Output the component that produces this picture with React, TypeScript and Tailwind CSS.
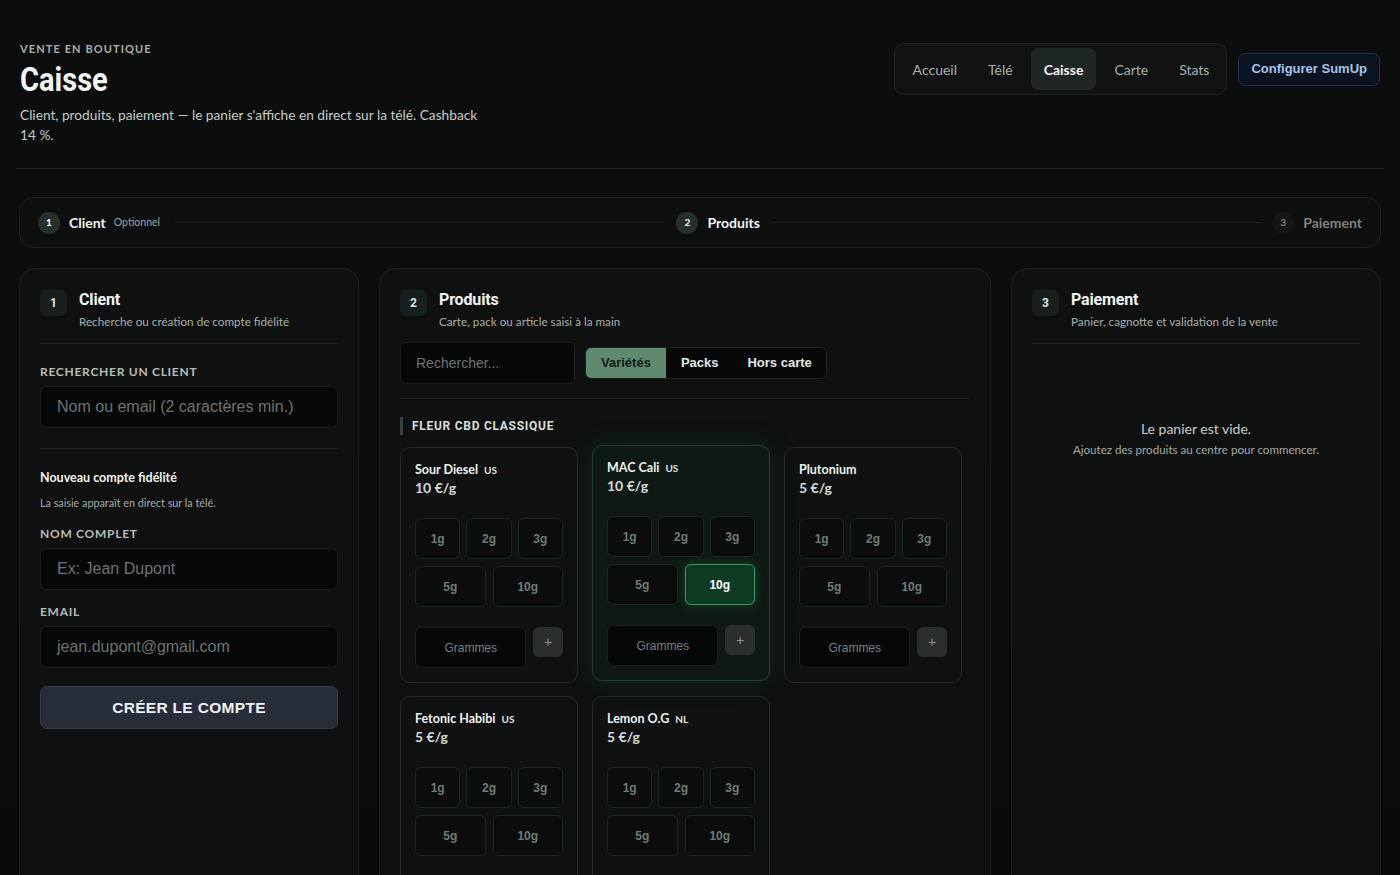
import React from "react";

const head = "font-['Roboto','Liberation_Sans',sans-serif]";
const body = "font-['Lato',sans-serif]";
const arial = "font-['Liberation_Sans',Arial,sans-serif]";

function Badge({ n }: { n: string }) {
  return (
    <div className={`w-[27px] h-[27px] rounded-[7px] bg-[#18201d] flex items-center justify-center text-[12px] font-bold text-[#dfe5e1] ${head}`}>
      {n}
    </div>
  );
}

function PanelHeader({ n, title, sub }: { n: string; title: string; sub: string }) {
  return (
    <div className="flex gap-[12px]">
      <Badge n={n} />
      <div className="pt-[1px]">
        <div className={`text-[16px] leading-[20px] font-bold tracking-[-0.01em] text-[#f2f5f3] ${head}`}>{title}</div>
        <div className={`text-[11.7px] leading-[14px] mt-[4px] text-[#a9b0ac] ${body}`}>{sub}</div>
      </div>
    </div>
  );
}

function Weight({ label, active }: { label: string; active?: boolean }) {
  return (
    <div
      className={`h-[41px] rounded-[6px] border flex items-center justify-center text-[12px] font-bold ${arial} ${
        active
          ? "bg-[#0f3a22] border-[#3b9a64] text-white shadow-[0_0_10px_rgba(40,160,90,0.35)]"
          : "bg-[#0a0d0b] border-[#19291f] text-[#6e7d73]"
      }`}
    >
      {label}
    </div>
  );
}

function Card({ name, origin, price, selected, active }: { name: string; origin?: string; price: string; selected?: boolean; active?: string }) {
  return (
    <div
      className={`w-[178px] h-[236px] rounded-[10px] border px-[14px] pt-[14px] ${
        selected
          ? "bg-[#0f1913] border-[#23402e] -translate-y-[2px] shadow-[0_0_24px_rgba(30,110,60,0.25)]"
          : "bg-[#0f1211] border-[#252b28]"
      }`}
    >
      <div className={`flex items-baseline gap-[6px] leading-[16px] ${body}`}>
        <span className="text-[12.5px] font-bold text-[#f0f3f1]">{name}</span>
        {origin && <span className="text-[10px] font-bold text-[#dfe4e1] uppercase">{origin}</span>}
      </div>
      <div className={`text-[14px] leading-[18px] font-bold text-[#d3d9d5] mt-[1px] ${body}`}>{price}</div>
      <div className="mt-[21px] grid grid-cols-3 gap-[6px]">
        <Weight label="1g" />
        <Weight label="2g" />
        <Weight label="3g" />
      </div>
      <div className="mt-[7px] grid grid-cols-2 gap-[7px]">
        <Weight label="5g" />
        <Weight label="10g" active={active === "10g"} />
      </div>
      <div className="mt-[20px] flex gap-[7px] items-start">
        <div className={`w-[113px] h-[41px] rounded-[6px] bg-[#050706] border border-[#1b201d] flex items-center justify-center text-[12px] text-[#7a807c] ${arial}`}>
          Grammes
        </div>
        <div className={`w-[30px] h-[30px] rounded-[6px] bg-[#2a2e2c] flex items-center justify-center text-[14px] text-[#8a908c] ${arial}`}>+</div>
      </div>
    </div>
  );
}

function Label({ children }: { children: React.ReactNode }) {
  return <div className={`text-[12px] leading-[16px] font-bold tracking-[0.06em] text-[#b8beba] uppercase ${body}`}>{children}</div>;
}

function Input({ ph }: { ph: string }) {
  return (
    <div className={`h-[42px] rounded-[7px] bg-[#060807] border border-[#1a1f1c] flex items-center px-[16px] text-[16px] text-[#6d7370] ${arial}`}>
      {ph}
    </div>
  );
}

export default function App() {
  return (
    <div className={`min-h-screen w-full bg-[#0a0c0b] bg-gradient-to-b from-[#0c0e0d] to-[#090b0a] text-white ${body} overflow-hidden`}>
      <div className="px-[16px]">
        {/* Header */}
        <div className="flex justify-between items-start pt-[42px] pb-[23px] px-[4px] border-b border-[#1a1e1c]">
          <div>
            <div className={`text-[11px] leading-[14px] font-bold tracking-[0.1em] text-[#a9afab] ${body}`}>VENTE EN BOUTIQUE</div>
            <div className={`text-[33px] leading-[38px] font-bold text-[#f4f6f5] mt-[5px] origin-left scale-x-[0.88] ${head}`}>Caisse</div>
            <div className={`text-[13.7px] leading-[20px] text-[#c6ccc8] mt-[6px] max-w-[470px] ${body}`}>
              Client, produits, paiement — le panier s'affiche en direct sur la télé. Cashback 14 %.
            </div>
          </div>
          <div className="flex items-center gap-[11px] mt-[1px]">
            <div className={`h-[52px] rounded-[10px] bg-[#101312] border border-[#1d2220] flex items-center gap-[5px] pl-[5px] pr-[4px] text-[14px] text-[#aab0ac] ${body}`}>
              <div className="px-[13px] h-[42px] flex items-center">Accueil</div>
              <div className="px-[13px] h-[42px] flex items-center">Télé</div>
              <div className="px-[13px] h-[42px] flex items-center rounded-[7px] bg-[#1e2723] text-[#f2f5f3] font-bold">Caisse</div>
              <div className="px-[13px] h-[42px] flex items-center">Carte</div>
              <div className="px-[13px] h-[42px] flex items-center">Stats</div>
            </div>
            <div className={`h-[33px] px-[12px] rounded-[7px] border border-[#1c3352] bg-[#0b1320] flex items-center text-[13px] font-bold text-[#a9c3ea] ${arial}`}>
              Configurer SumUp
            </div>
          </div>
        </div>

        <div className="px-[3px]">
          {/* Stepper */}
          <div className="mt-[28px] h-[51px] rounded-[14px] border border-[#1a1e1c] bg-[#0d0f0e] flex items-center px-[18px]">
            <div className="flex items-center gap-[9px]">
              <div className="w-[22px] h-[22px] rounded-full bg-[#26302b] flex items-center justify-center text-[10px] font-bold text-white">1</div>
              <span className={`text-[14px] font-bold text-[#f2f5f3] ${body}`}>Client</span>
              <span className="text-[10.5px] text-[#9ca29e] -ml-[1px]">Optionnel</span>
            </div>
            <div className="flex-1 h-px bg-[#1a1e1c] ml-[15px] mr-[12px]" />
            <div className="flex items-center gap-[9px]">
              <div className="w-[22px] h-[22px] rounded-full bg-[#26302b] flex items-center justify-center text-[10px] font-bold text-white">2</div>
              <span className={`text-[14px] font-bold text-[#f2f5f3] ${body}`}>Produits</span>
            </div>
            <div className="flex-1 h-px bg-[#1a1e1c] ml-[12px] mr-[11px]" />
            <div className="flex items-center gap-[9px]">
              <div className="w-[22px] h-[22px] rounded-full bg-[#121614] flex items-center justify-center text-[10px] font-bold text-[#7d847f]">3</div>
              <span className={`text-[14px] font-bold text-[#7d847f] ${body}`}>Paiement</span>
            </div>
          </div>

          {/* Panels */}
          <div className="mt-[20px] grid grid-cols-[340px_612px_1fr] gap-[20px] items-stretch">
            {/* Client */}
            <div className="rounded-[16px] border border-[#1c211f] bg-[#0e1110] px-[20px] pt-[20px] h-[700px]">
              <PanelHeader n="1" title="Client" sub="Recherche ou création de compte fidélité" />
              <div className="h-px bg-[#1d2220] mt-[15px]" />
              <div className="mt-[20px]">
                <Label>Rechercher un client</Label>
              </div>
              <div className="mt-[6px]">
                <Input ph="Nom ou email (2 caractères min.)" />
              </div>
              <div className="h-px bg-[#1d2220] mt-[20px]" />
              <div className={`mt-[20px] text-[12.5px] leading-[18px] font-bold text-[#f0f3f1] ${body}`}>Nouveau compte fidélité</div>
              <div className={`mt-[8px] text-[10.8px] leading-[15px] text-[#a3aaa6] ${body}`}>La saisie apparaît en direct sur la télé.</div>
              <div className="mt-[16px]"><Label>Nom complet</Label></div>
              <div className="mt-[6px]"><Input ph="Ex: Jean Dupont" /></div>
              <div className="mt-[14px]"><Label>Email</Label></div>
              <div className="mt-[6px]"><Input ph="jean.dupont@gmail.com" /></div>
              <div className={`mt-[18px] h-[43px] rounded-[7px] bg-[#272d38] border border-[#353c48] flex items-center justify-center text-[15.5px] font-bold tracking-[0.02em] text-[#eef1f5] ${arial}`}>
                CRÉER LE COMPTE
              </div>
            </div>

            {/* Produits */}
            <div className="rounded-[16px] border border-[#1c211f] bg-[#0e1110] px-[20px] pt-[20px] pb-[20px]">
              <PanelHeader n="2" title="Produits" sub="Carte, pack ou article saisi à la main" />
              <div className="mt-[14px] flex items-center gap-[10px]">
                <div className={`w-[175px] h-[42px] rounded-[6px] bg-[#060807] border border-[#1a1f1c] flex items-center px-[15px] text-[14px] text-[#6d7370] ${arial}`}>
                  Rechercher...
                </div>
                <div className={`h-[32px] rounded-[6px] border border-[#1d2220] bg-[#070908] flex items-center overflow-hidden text-[13px] font-bold ${arial}`}>
                  <div className="h-full px-[15px] flex items-center bg-[#5f8a70] text-[#0e1a13]">Variétés</div>
                  <div className="h-full px-[15px] flex items-center text-[#e3e8e5]">Packs</div>
                  <div className="h-full px-[14px] flex items-center text-[#e3e8e5]">Hors carte</div>
                </div>
              </div>
              <div className="h-px bg-[#1d2220] mt-[14px]" />
              <div className="mt-[18px] flex items-center gap-[9px]">
                <div className="w-[3px] h-[18px] bg-[#3a403c]" />
                <div className={`text-[12px] font-bold tracking-[0.06em] text-[#d9dfdb] ${head}`}>FLEUR CBD CLASSIQUE</div>
              </div>
              <div className="mt-[12px] flex flex-wrap gap-x-[14px] gap-y-[13px]">
                <Card name="Sour Diesel" origin="us" price="10 €/g" />
                <Card name="MAC Cali" origin="us" price="10 €/g" selected active="10g" />
                <Card name="Plutonium" price="5 €/g" />
                <Card name="Fetonic Habibi" origin="us" price="5 €/g" />
                <Card name="Lemon O.G" origin="nl" price="5 €/g" />
              </div>
            </div>

            {/* Paiement */}
            <div className="rounded-[16px] border border-[#1c211f] bg-[#0e1110] px-[20px] pt-[20px] h-[700px]">
              <PanelHeader n="3" title="Paiement" sub="Panier, cagnotte et validation de la vente" />
              <div className="h-px bg-[#1d2220] mt-[15px]" />
              <div className="mt-[74px] text-center">
                <div className={`text-[14px] text-[#c8cec9] ${body}`}>Le panier est vide.</div>
                <div className={`mt-[2px] text-[11.6px] text-[#a3aaa6] ${body}`}>Ajoutez des produits au centre pour commencer.</div>
              </div>
            </div>
          </div>
        </div>
      </div>
    </div>
  );
}
